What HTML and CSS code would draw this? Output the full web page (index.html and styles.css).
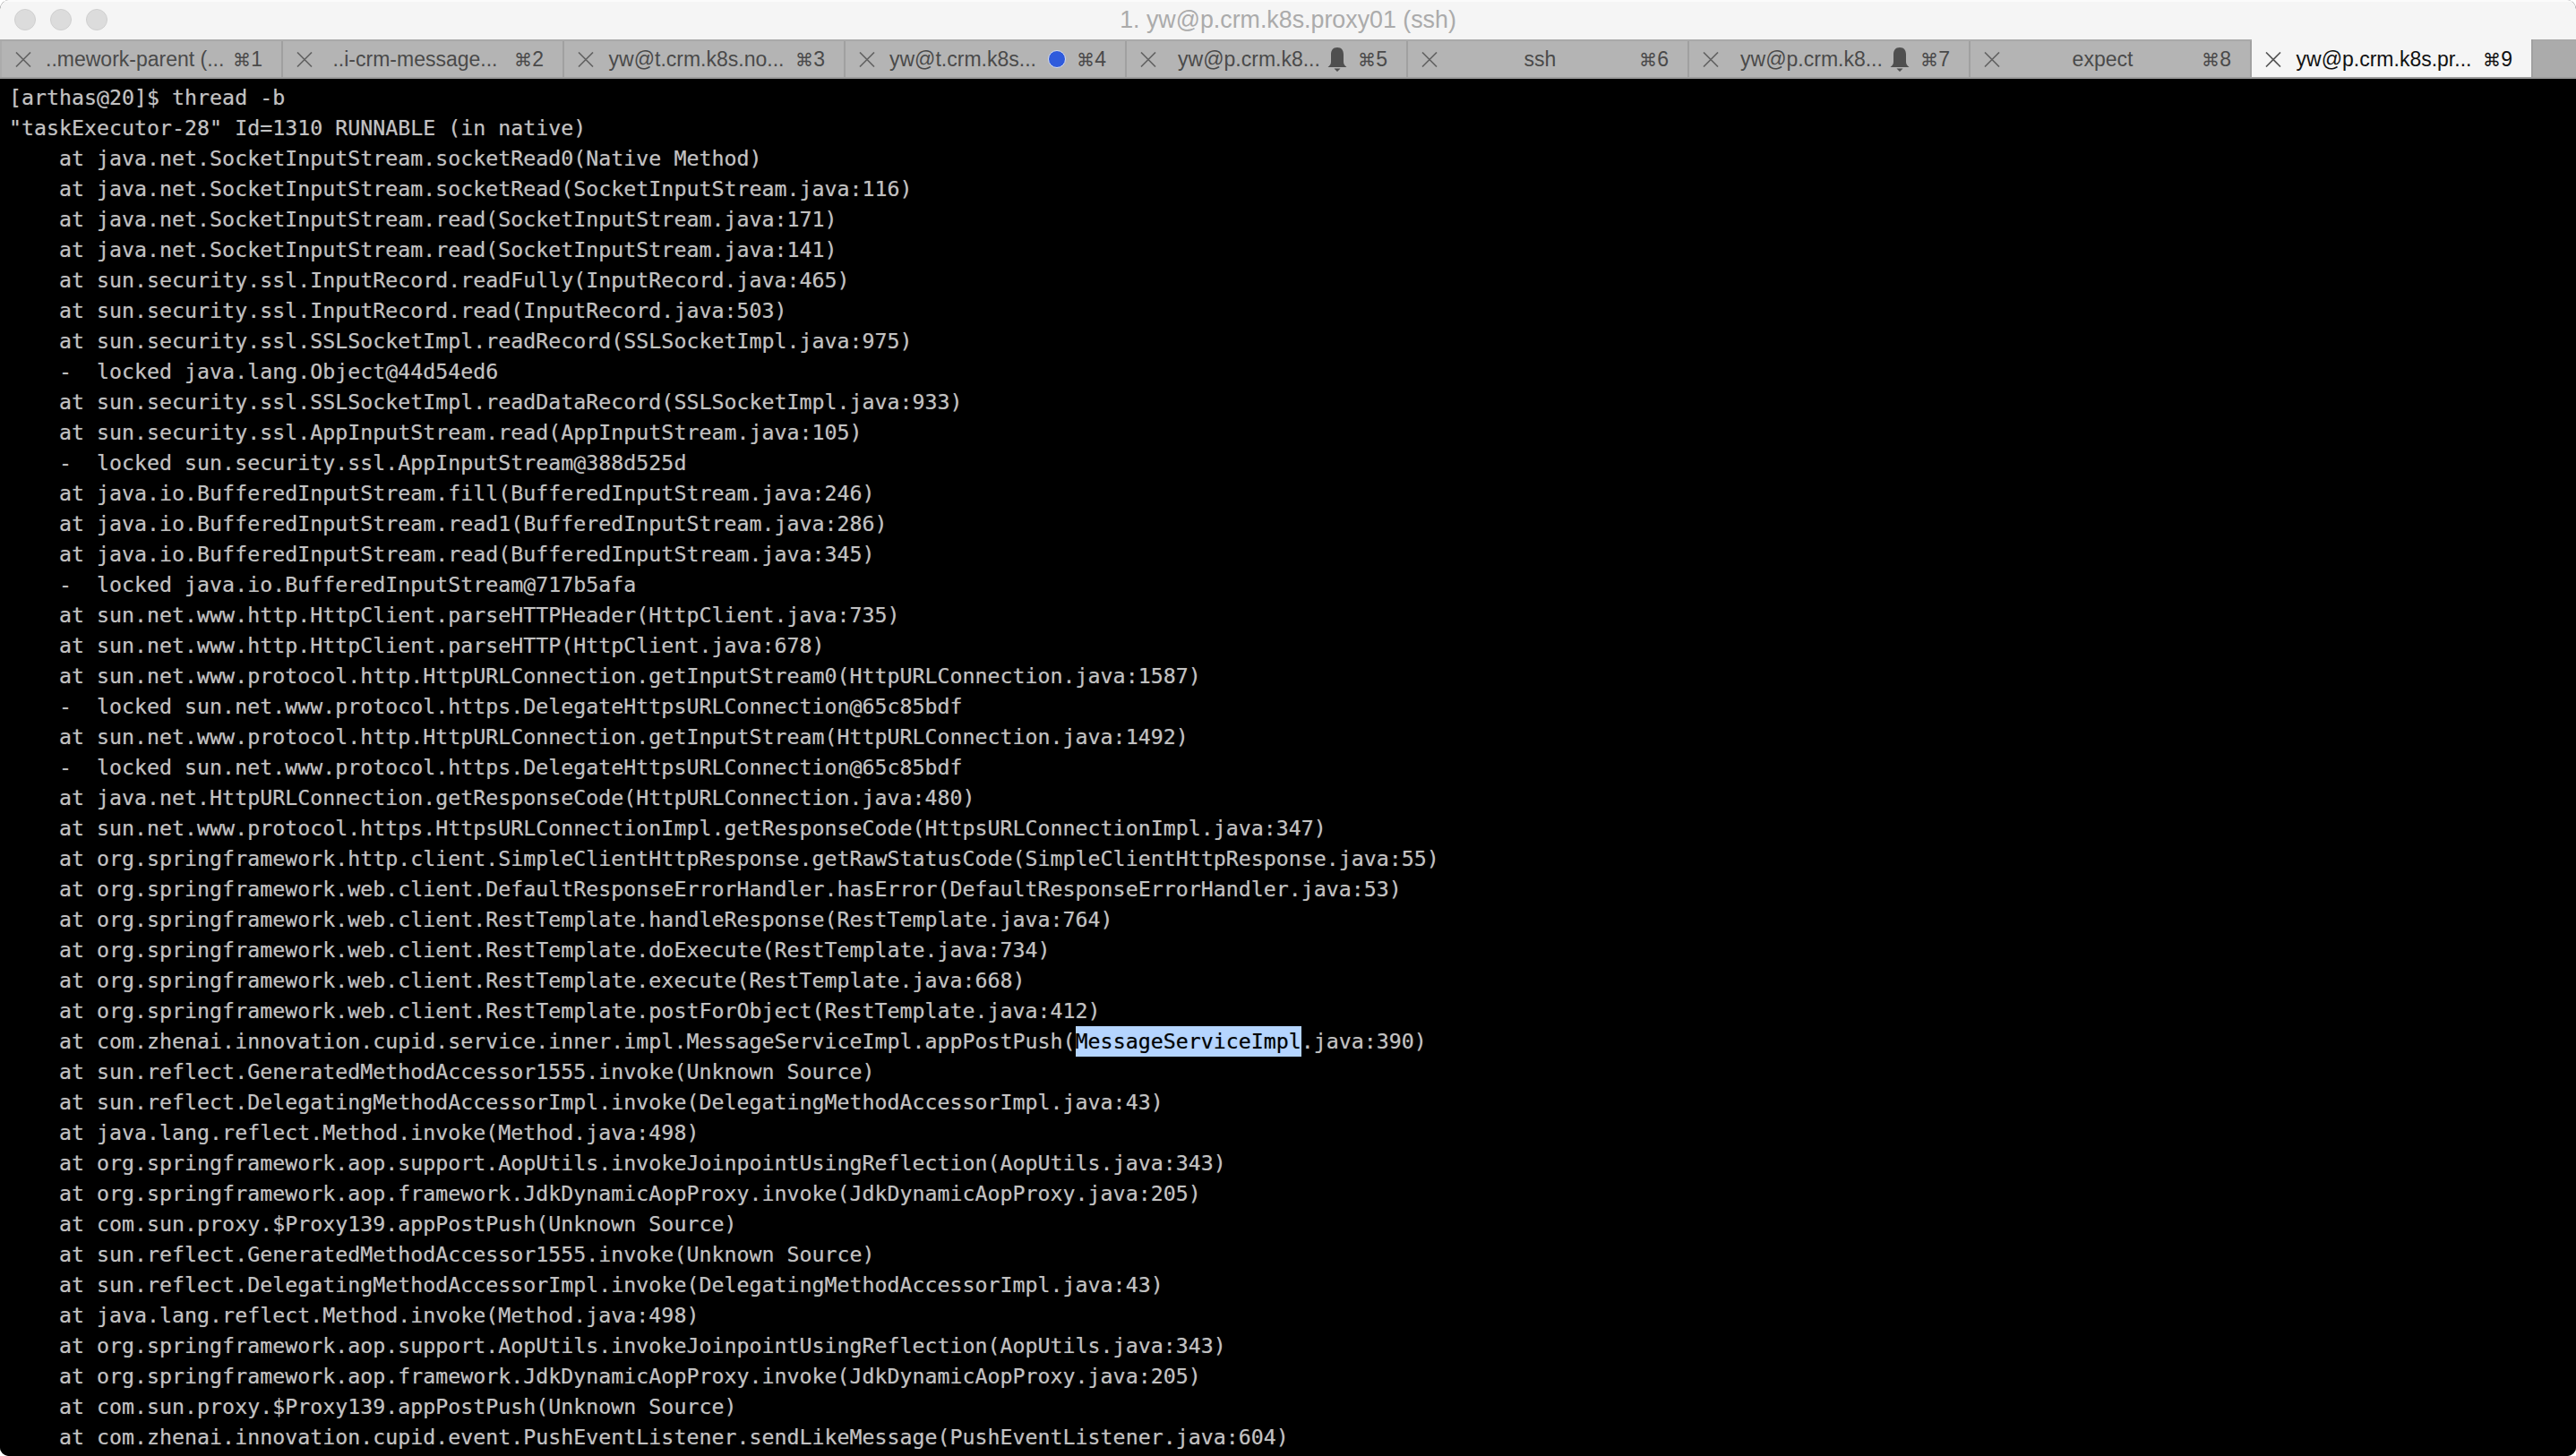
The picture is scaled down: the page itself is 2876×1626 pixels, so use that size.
FILE: index.html
```html
<!DOCTYPE html>
<html lang="en">
<head>
<meta charset="utf-8">
<title>1. yw@p.crm.k8s.proxy01 (ssh)</title>
<link rel="stylesheet" href="styles.css">
</head>
<body>
<svg class="defs" width="0" height="0" aria-hidden="true">
<symbol id="x" viewBox="0 0 18 17"><path d="M1 .5 17 16.500M17 .5 1 16.500" fill="none" stroke="currentColor" stroke-width="1.6"/></symbol>
<symbol id="bell" viewBox="0 0 22 27"><path d="M11 0C6 0 4 3.500 4 8V16C4 19 2.500 20 .5 22H21.500C19.500 20 18 19 18 16V8C18 3.500 16 0 11 0ZM7.500 23.500H14.500L11 27Z" fill="currentColor"/></symbol>
</svg>
<div class="window">
  <header class="titlebar">
    <div class="lights"><i class="light"></i><i class="light"></i><i class="light"></i></div>
    <div class="wintitle">1. yw@p.crm.k8s.proxy01 (ssh)</div>
  </header>
  <nav class="tabbar">
    <div class="tab"><svg class="close"><use href="#x"/></svg><span class="name">..mework-parent (...</span><span class="key"><span class="cmd">⌘</span>1</span></div>
    <div class="tab"><svg class="close"><use href="#x"/></svg><span class="name">..i-crm-message...</span><span class="key"><span class="cmd">⌘</span>2</span></div>
    <div class="tab"><svg class="close"><use href="#x"/></svg><span class="name">yw@t.crm.k8s.no...</span><span class="key"><span class="cmd">⌘</span>3</span></div>
    <div class="tab dotted"><svg class="close"><use href="#x"/></svg><span class="name">yw@t.crm.k8s...</span><i class="dot"></i><span class="key"><span class="cmd">⌘</span>4</span></div>
    <div class="tab"><svg class="close"><use href="#x"/></svg><span class="name">yw@p.crm.k8...</span><svg class="bell"><use href="#bell"/></svg><span class="key"><span class="cmd">⌘</span>5</span></div>
    <div class="tab"><svg class="close"><use href="#x"/></svg><span class="name">ssh</span><span class="key"><span class="cmd">⌘</span>6</span></div>
    <div class="tab"><svg class="close"><use href="#x"/></svg><span class="name">yw@p.crm.k8...</span><svg class="bell"><use href="#bell"/></svg><span class="key"><span class="cmd">⌘</span>7</span></div>
    <div class="tab"><svg class="close"><use href="#x"/></svg><span class="name">expect</span><span class="key"><span class="cmd">⌘</span>8</span></div>
    <div class="tab active"><svg class="close"><use href="#x"/></svg><span class="name">yw@p.crm.k8s.pr...</span><span class="key"><span class="cmd">⌘</span>9</span></div>
  </nav>
  <pre class="terminal">[arthas@20]$ thread -b
"taskExecutor-28" Id=1310 RUNNABLE (in native)
    at java.net.SocketInputStream.socketRead0(Native Method)
    at java.net.SocketInputStream.socketRead(SocketInputStream.java:116)
    at java.net.SocketInputStream.read(SocketInputStream.java:171)
    at java.net.SocketInputStream.read(SocketInputStream.java:141)
    at sun.security.ssl.InputRecord.readFully(InputRecord.java:465)
    at sun.security.ssl.InputRecord.read(InputRecord.java:503)
    at sun.security.ssl.SSLSocketImpl.readRecord(SSLSocketImpl.java:975)
    -  locked java.lang.Object@44d54ed6
    at sun.security.ssl.SSLSocketImpl.readDataRecord(SSLSocketImpl.java:933)
    at sun.security.ssl.AppInputStream.read(AppInputStream.java:105)
    -  locked sun.security.ssl.AppInputStream@388d525d
    at java.io.BufferedInputStream.fill(BufferedInputStream.java:246)
    at java.io.BufferedInputStream.read1(BufferedInputStream.java:286)
    at java.io.BufferedInputStream.read(BufferedInputStream.java:345)
    -  locked java.io.BufferedInputStream@717b5afa
    at sun.net.www.http.HttpClient.parseHTTPHeader(HttpClient.java:735)
    at sun.net.www.http.HttpClient.parseHTTP(HttpClient.java:678)
    at sun.net.www.protocol.http.HttpURLConnection.getInputStream0(HttpURLConnection.java:1587)
    -  locked sun.net.www.protocol.https.DelegateHttpsURLConnection@65c85bdf
    at sun.net.www.protocol.http.HttpURLConnection.getInputStream(HttpURLConnection.java:1492)
    -  locked sun.net.www.protocol.https.DelegateHttpsURLConnection@65c85bdf
    at java.net.HttpURLConnection.getResponseCode(HttpURLConnection.java:480)
    at sun.net.www.protocol.https.HttpsURLConnectionImpl.getResponseCode(HttpsURLConnectionImpl.java:347)
    at org.springframework.http.client.SimpleClientHttpResponse.getRawStatusCode(SimpleClientHttpResponse.java:55)
    at org.springframework.web.client.DefaultResponseErrorHandler.hasError(DefaultResponseErrorHandler.java:53)
    at org.springframework.web.client.RestTemplate.handleResponse(RestTemplate.java:764)
    at org.springframework.web.client.RestTemplate.doExecute(RestTemplate.java:734)
    at org.springframework.web.client.RestTemplate.execute(RestTemplate.java:668)
    at org.springframework.web.client.RestTemplate.postForObject(RestTemplate.java:412)
    at com.zhenai.innovation.cupid.service.inner.impl.MessageServiceImpl.appPostPush(<span class="sel">MessageServiceImpl</span>.java:390)
    at sun.reflect.GeneratedMethodAccessor1555.invoke(Unknown Source)
    at sun.reflect.DelegatingMethodAccessorImpl.invoke(DelegatingMethodAccessorImpl.java:43)
    at java.lang.reflect.Method.invoke(Method.java:498)
    at org.springframework.aop.support.AopUtils.invokeJoinpointUsingReflection(AopUtils.java:343)
    at org.springframework.aop.framework.JdkDynamicAopProxy.invoke(JdkDynamicAopProxy.java:205)
    at com.sun.proxy.$Proxy139.appPostPush(Unknown Source)
    at sun.reflect.GeneratedMethodAccessor1555.invoke(Unknown Source)
    at sun.reflect.DelegatingMethodAccessorImpl.invoke(DelegatingMethodAccessorImpl.java:43)
    at java.lang.reflect.Method.invoke(Method.java:498)
    at org.springframework.aop.support.AopUtils.invokeJoinpointUsingReflection(AopUtils.java:343)
    at org.springframework.aop.framework.JdkDynamicAopProxy.invoke(JdkDynamicAopProxy.java:205)
    at com.sun.proxy.$Proxy139.appPostPush(Unknown Source)
    at com.zhenai.innovation.cupid.event.PushEventListener.sendLikeMessage(PushEventListener.java:604)</pre>
</div>
</body>
</html>
```
FILE: styles.css
```css
* { box-sizing: border-box; }
html, body { margin: 0; height: 100%; background: #fff; overflow: hidden; }
.defs { position: absolute; }
.window {
  height: 1626px;
  display: flex;
  flex-direction: column;
  border-radius: 10px;
  overflow: hidden;
  background: #000;
}
.titlebar {
  height: 44px;
  flex: none;
  background: #f5f5f5;
  box-shadow: inset 0 2px #fbfbfb;
  display: flex;
  align-items: center;
  position: relative;
}
.lights { display: flex; gap: 16px; padding-left: 16px; }
.light {
  width: 24px;
  height: 24px;
  border-radius: 50%;
  background: #dcdcdc;
  border: 1px solid #cfcfcf;
}
.wintitle {
  position: absolute;
  left: 0;
  right: 0;
  text-align: center;
  font: 26.8px/44px "Liberation Sans", Arial, sans-serif;
  color: #ababab;
}
.tabbar {
  height: 44px;
  flex: none;
  display: flex;
  padding-left: 2px;
  background: #ababab;
  border-top: 2px solid #a9a9a9;
  border-bottom: 2px solid #9c9c9c;
  font: 23px/40px "Liberation Sans", Arial, sans-serif;
  color: #4a4a4a;
}
.tab {
  width: 314px;
  height: 40px;
  flex: none;
  display: flex;
  align-items: center;
  padding: 0 21px 0 15px;
  background: #b4b4b4;
  border-right: 2px solid #a0a0a0;
}
.tab.active {
  background: #f5f5f5;
  color: #111;
  height: 42px;
  margin-top: -2px;
  padding-top: 2px;
}
.close { width: 18px; height: 17px; flex: none; color: #626262; margin-right: 16px; }
.tab.active .close { color: #555; }
.name {
  flex: 1;
  min-width: 0;
  white-space: nowrap;
  text-align: center;
}
.dotted .name { text-align: left; }
.key { flex: none; width: 33px; margin-left: 12px; white-space: nowrap; text-align: right; }
.cmd { font-size: 20px; }
.dot {
  width: 20px;
  height: 20px;
  flex: none;
  border-radius: 50%;
  background: #2f5bdc;
  border: 1px solid #d7def0;
}
.bell { width: 22px; height: 27px; flex: none; color: #4f4f4f; }
.terminal {
  flex: 1;
  margin: 0;
  padding: 4px 10px 0;
  background: #000;
  color: #c2c2c2;
  font: 23.28px/34px "DejaVu Sans Mono", "Liberation Mono", monospace;
  text-shadow: 0 0 1px rgba(190, 190, 190, .45);
  overflow: hidden;
}
.sel { display: inline-block; background: #b5d5ff; color: #000; text-shadow: 0 0 1px rgba(0, 0, 0, .4); }
```
